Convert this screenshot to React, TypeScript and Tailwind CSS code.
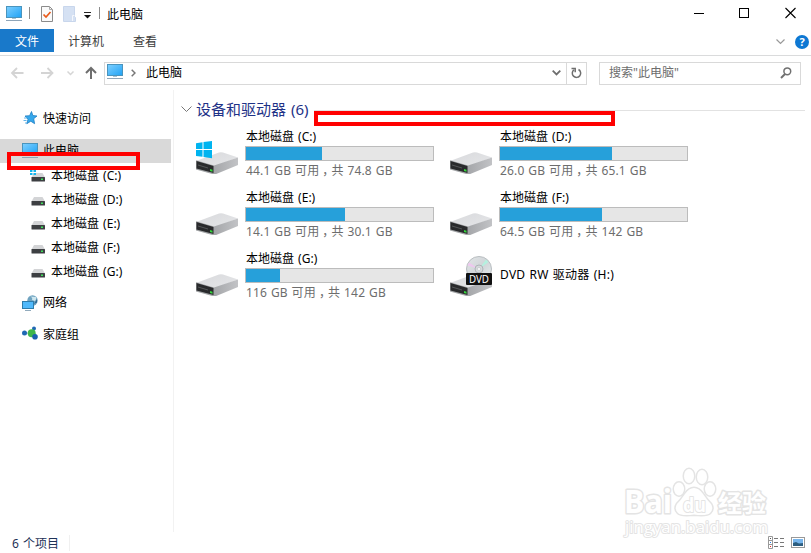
type Drive = {
  name: string;
  letter: string;
  kind: "system" | "disk" | "dvd";
  free?: string;
  total?: string;
  used?: number;
};

const drives: Drive[] = [
  { name: "本地磁盘 (C:)", letter: "C", kind: "system", free: "44.1 GB 可用", total: "共 74.8 GB", used: 76 },
  { name: "本地磁盘 (D:)", letter: "D", kind: "disk", free: "26.0 GB 可用", total: "共 65.1 GB", used: 112 },
  { name: "本地磁盘 (E:)", letter: "E", kind: "disk", free: "14.1 GB 可用", total: "共 30.1 GB", used: 99 },
  { name: "本地磁盘 (F:)", letter: "F", kind: "disk", free: "64.5 GB 可用", total: "共 142 GB", used: 102 },
  { name: "本地磁盘 (G:)", letter: "G", kind: "disk", free: "116 GB 可用", total: "共 142 GB", used: 34 },
  { name: "DVD RW 驱动器 (H:)", letter: "H", kind: "dvd" },
];

function PcIcon() {
  return (
    <svg width="16" height="16" viewBox="0 0 16 16" className="shrink-0">
      <defs>
        <linearGradient id="screen" x1="0" y1="0" x2="1" y2="1">
          <stop offset="0" stopColor="#7fd0ff" />
          <stop offset="1" stopColor="#1fa2f5" />
        </linearGradient>
      </defs>
      <rect x="0.5" y="0.5" width="15" height="11" fill="url(#screen)" stroke="#4a94bd" />
      <path d="M6 12.500h4" stroke="#a9c3d3" />
      <path d="M0 14.500h16" stroke="#8fa5b8" />
    </svg>
  );
}

function SmallDriveIcon({ system }: { system?: boolean }) {
  return (
    <svg width="16" height="16" viewBox="0 0 16 16" className="mt-1 shrink-0">
      <path d="M4 4h8.500l2.500 4.500H1.500z" fill="#d3d4d6" />
      <rect x="1.500" y="8" width="13.500" height="4.500" rx="0.500" fill="#3d3f42" />
      <rect x="11" y="9.500" width="2" height="1.500" fill="#3ee05a" />
      {system && (
        <path d="M0 1h2.500v2H0zM3.500 1H6v2H3.500zM0 4h2.500v2H0zM3.500 4H6v2H3.500z" fill="#12b5ee" />
      )}
    </svg>
  );
}

function DriveIcon({ kind }: { kind: Drive["kind"] }) {
  return (
    <svg width="44" height="46" viewBox="0 0 44 46" className="shrink-0">
      <defs>
        <linearGradient id="lid" x1="0" y1="0" x2="1" y2="1">
          <stop offset="0" stopColor="#d8d9dc" />
          <stop offset="1" stopColor="#e6e7e9" />
        </linearGradient>
        <linearGradient id="side" x1="0" y1="0" x2="1" y2="0">
          <stop offset="0" stopColor="#a4a6a9" />
          <stop offset="1" stopColor="#c2c3c6" />
        </linearGradient>
        <linearGradient id="disc" x1="0" y1="0" x2="1" y2="1">
          <stop offset="0" stopColor="#e3e6e8" />
          <stop offset="0.500" stopColor="#d0d5d8" />
          <stop offset="1" stopColor="#e8eef0" />
        </linearGradient>
      </defs>
      <path d="M1 33L24 24.500Q26 24 28 24.500L43 29.500L19 38.500z" fill="url(#lid)" />
      <path d="M19 37.500L43 29.500V37L20 46.500L18.500 46z" fill="url(#side)" />
      <path d="M1 32.300L19 37.500V46.500L1 41.500z" fill="#a2a4a6" />
      <path d="M1.500 33L18.500 38V45L1.500 40.500z" fill="#292a2c" />
      <path d="M3 37l10 3" stroke="#555759" />
      <path d="M15 41l2.500 0.700v2L15 43z" fill="#35d63d" />
      {kind === "system" && (
        <path
          d="M1 15.200L7.500 14.200V21H1zM8.500 14L17 12.900V21H8.500zM1 22h6.500v6.800L1 27.900zM8.500 22H17v8.200L8.500 29z"
          fill="#00b4f0"
        />
      )}
      {kind === "dvd" && (
        <>
          <circle cx="30" cy="19" r="12.500" fill="url(#disc)" stroke="#b9bec1" />
          <path d="M30 19L18.500 15.500L20 12.500z" fill="#eec9ef" />
          <path d="M30 19L37 9.500l2.500 2.500z" fill="#b5f0df" />
          <circle cx="30" cy="19" r="4" fill="#d5d9db" stroke="#aeb4b8" />
          <circle cx="30" cy="19" r="1.500" fill="#fff" stroke="#aeb4b8" strokeWidth="0.500" />
          <rect x="17" y="23" width="26" height="12" rx="1" fill="#111" />
          <text x="30" y="32.700" textAnchor="middle" fontSize="10.500" fill="#fff" textLength="20" lengthAdjust="spacingAndGlyphs">
            DVD
          </text>
        </>
      )}
    </svg>
  );
}

function StarIcon() {
  return (
    <svg width="16" height="16" viewBox="0 0 16 16" className="shrink-0">
      <path
        d="M8.500 1.500L9.800 5.500L14 6L10.700 8.700L11.600 13.700L7.800 11.200L3.800 13.700L5 9.200L2 6L6.600 5.700z"
        fill="#35a8ec"
        stroke="#1f7fc4"
        strokeWidth="0.800"
      />
      <path d="M1 8h3M0.500 10.500h3M2 13h2" stroke="#64b4e8" />
    </svg>
  );
}

function NetworkIcon() {
  return (
    <svg width="16" height="16" viewBox="0 0 16 16" className="shrink-0">
      <circle cx="10.500" cy="5.500" r="5.200" fill="#6fa3c0" />
      <path d="M8 1.500q3 1 2 3.500l3 1q2-2 1-4z" fill="#cde6ee" />
      <path d="M12 9l3-1.500V4z" fill="#2c6896" />
      <rect x="0.500" y="6.500" width="11" height="7" fill="#50b9fb" stroke="#2f7dab" />
      <path d="M3 15.500h6" stroke="#91aabc" />
    </svg>
  );
}

function HomegroupIcon() {
  return (
    <svg width="16" height="16" viewBox="0 0 16 16" className="shrink-0">
      <path d="M3 7L10 7L12.500 2.500M10 7.500l3 3" stroke="#9fc8d8" fill="none" />
      <circle cx="2.500" cy="7" r="2.500" fill="#1f68b4" />
      <circle cx="12" cy="2.500" r="2" fill="#1f68b4" />
      <circle cx="9.700" cy="7.200" r="4" fill="#3fb64a" />
      <circle cx="13" cy="10.800" r="2.800" fill="#1a5fae" />
    </svg>
  );
}

function TitleBar() {
  return (
    <div className="flex h-[29px] items-center pl-1.5">
      <div className="mb-0.5">
        <PcIcon />
      </div>
      <div className="mb-1 ml-[7px] h-3 w-px bg-[#8c8c8c]" />
      <svg width="12" height="16" viewBox="0 0 12 16" className="mb-px ml-[11px]">
        <path d="M0.500 0.500h8l3 3v12h-11z" fill="#fafafa" stroke="#8b8b8b" />
        <path d="M8.500 0.500v3h3" fill="none" stroke="#aaa" />
        <path d="M2.500 8.500l2.500 2.500L9.500 6" fill="none" stroke="#e85a1a" strokeWidth="1.700" />
      </svg>
      <svg width="13" height="16" viewBox="0 0 13 16" className="mb-px ml-2.5">
        <path d="M0.500 0.500h11v10l1 1v4h-12z" fill="#d5e1f3" stroke="#c8d6ec" />
        <path d="M9.500 15V9.500h2" fill="none" stroke="#f4f7fc" />
      </svg>
      <svg width="7" height="7" viewBox="0 0 7 7" className="mt-0.5 ml-2">
        <path d="M0 0.500h7" stroke="#222" />
        <path d="M0 3h7L3.500 6.500z" fill="#111" />
      </svg>
      <div className="mb-1 ml-2 h-3 w-px bg-[#8c8c8c]" />
      <span className="ml-[7px] text-black">此电脑</span>
      <svg width="103" height="12" viewBox="0 0 103 12" className="mr-3.5 mb-[3px] ml-auto">
        <path d="M0 6.500h10" stroke="#000" />
        <rect x="45.500" y="1.500" width="9" height="9" fill="none" stroke="#000" />
        <path d="M91.500 1l10 10M101.500 1l-10 10" stroke="#000" strokeWidth="1.100" />
      </svg>
    </div>
  );
}

function RibbonTabs() {
  return (
    <div className="flex h-[27px] items-start border-b border-[#dadbdc] text-[#3b3b3b]">
      <div className="flex h-[23px] w-[54px] items-center justify-center bg-[#1979ca] pt-0.5 text-white">文件</div>
      <div className="flex h-[25px] items-center pl-3.5">计算机</div>
      <div className="flex h-[25px] items-center pl-[29px]">查看</div>
      <div className="ml-auto flex h-[26px] items-center">
        <svg width="9" height="6" viewBox="0 0 9 6">
          <path d="M0.500 0.500l4 4 4-4" fill="none" stroke="#999" strokeWidth="1.200" />
        </svg>
        <div className="mr-0.5 ml-2.5 flex size-3.5 items-center justify-center rounded-full bg-[#0e78d3] text-[11px] font-bold text-white">
          ?
        </div>
      </div>
    </div>
  );
}

function AddressBar() {
  return (
    <div className="flex h-[34px] items-center">
      <svg width="104" height="14" viewBox="0 0 104 14" fill="none">
        <path d="M23.500 7H12M17 2L12 7l5 5" stroke="#d4d4d4" strokeWidth="1.800" />
        <path d="M41 7h11.500M47.500 2l5 5-5 5" stroke="#d4d4d4" strokeWidth="1.800" />
        <path d="M67.500 5.500l3 3 3-3" stroke="#d5d5d5" strokeWidth="1.500" />
        <path d="M91 13V2M86 7l5-5 5 5" stroke="#6e6e6e" strokeWidth="2" />
      </svg>
      <div className="flex h-[23px] w-[483px] items-center border border-[#d9d9d9] pl-0.5">
        <div className="mb-0.5">
          <PcIcon />
        </div>
        <svg width="5" height="8" viewBox="0 0 5 8" className="ml-2">
          <path d="M0.700 0.700L4 4L0.700 7.300" fill="none" stroke="#777" strokeWidth="1.500" />
        </svg>
        <span className="ml-2.5 text-black">此电脑</span>
        <svg width="9" height="6" viewBox="0 0 9 6" className="ml-auto">
          <path d="M0.700 0.700l3.800 3.800 3.800-3.800" fill="none" stroke="#6e6e6e" strokeWidth="1.800" />
        </svg>
        <div className="ml-[5px] flex h-full w-5 items-center justify-center border-l border-[#d9d9d9]">
          <svg width="11" height="12" viewBox="0 0 11 12" fill="none" stroke="#6e6e6e" strokeWidth="1.500">
            <path d="M7.500 2.500A4.200 4.200 0 1 1 3 2.800" />
            <path d="M0.500 1.500h3.700v3.700" />
          </svg>
        </div>
      </div>
      <div className="ml-3 flex h-[23px] w-[202px] items-center border border-[#d9d9d9] pl-[9px] text-[#6d6d6d]">
        搜索"此电脑"
        <svg width="12" height="12" viewBox="0 0 12 12" className="mr-2 ml-auto">
          <circle cx="7.300" cy="4.300" r="3.400" fill="none" stroke="#707070" strokeWidth="1.500" />
          <path d="M5 7L1 11" stroke="#707070" strokeWidth="2" />
        </svg>
      </div>
    </div>
  );
}

function Sidebar() {
  return (
    <nav className="w-[174px] shrink-0 border-r border-[#f2f2f2] pt-4 text-black">
      <div className="flex h-6 items-center gap-1 pl-[23px]">
        <StarIcon />
        <span className="pt-0.5">快速访问</span>
      </div>
      <div className="mt-[9px] flex h-6 w-[171px] items-center gap-[5px] bg-[#d9d9d9] pl-[22px]">
        <PcIcon />
        <span>此电脑</span>
      </div>
      {drives
        .filter((d) => d.kind !== "dvd")
        .map((d) => (
          <div key={d.letter} className="flex h-6 items-center gap-[5px] pl-[30px]">
            <SmallDriveIcon system={d.kind === "system"} />
            <span className="pt-px [word-spacing:1px]">{d.name}</span>
          </div>
        ))}
      <div className="mt-[7px] flex h-6 items-center gap-[5px] pt-0.5 pl-[22px]">
        <NetworkIcon />
        网络
      </div>
      <div className="mt-2 flex h-6 items-center gap-[5px] pl-[22px]">
        <HomegroupIcon />
        <span className="pt-0.5">家庭组</span>
      </div>
    </nav>
  );
}

function DriveTile({ drive }: { drive: Drive }) {
  return (
    <div className="flex h-[61px] w-[254px]">
      <DriveIcon kind={drive.kind} />
      {drive.kind === "dvd" ? (
        <span className="ml-[7px] pt-4 leading-[18px] tracking-[0.25px] text-black [word-spacing:0.8px]">
          {drive.name}
        </span>
      ) : (
        <div className="ml-1.5 w-[189px]">
          <div className="h-[18px] pl-px leading-[17px] text-black [word-spacing:1px]">{drive.name}</div>
          <div className="h-[15px] border border-[#bcbcbc] bg-[#e6e6e6]">
            <div className="h-full bg-[#26a0da]" style={{ width: drive.used }} />
          </div>
          <div className="pl-px leading-[19px] tracking-[0.15px] text-[#6d6d6d] [word-spacing:0.6px]">
            {drive.free}
            <span className="mx-[3px] [font-feature-settings:'halt']">，</span>
            {drive.total}
          </div>
        </div>
      )}
    </div>
  );
}

function Watermark() {
  return (
    <svg
      width="160"
      height="80"
      viewBox="0 0 160 80"
      className="absolute top-[463px] left-[616px]"
      fill="#fff"
      stroke="#e4e4e4"
      strokeWidth="3"
      strokeLinejoin="round"
      paintOrder="stroke"
      fontFamily="'Open Sans', 'Noto Sans CJK SC', sans-serif"
    >
      <ellipse cx="63" cy="26" rx="5" ry="6.500" />
      <ellipse cx="73" cy="13" rx="5" ry="7" />
      <ellipse cx="86" cy="14" rx="5" ry="7" />
      <ellipse cx="94" cy="26" rx="5" ry="6.500" />
      <path d="M78 25q5 0 9 6t8 10q3 5-1 9q-3 3-16 1.500q-13 1.500-16-1.500q-4-4-1-9q4-4 8-10t9-6z" />
      <text x="8" y="50" fontSize="33" fontWeight="bold" textLength="48" lengthAdjust="spacingAndGlyphs">Bai</text>
      <text x="67" y="49" fontSize="20" fontWeight="bold" strokeWidth="2" textLength="23" lengthAdjust="spacingAndGlyphs">du</text>
      <text x="102" y="49" fontSize="24" fontWeight="bold" textLength="48" lengthAdjust="spacingAndGlyphs">经验</text>
      <text x="9" y="70" fontSize="17" strokeWidth="2" textLength="143" lengthAdjust="spacingAndGlyphs">jingyan.baidu.com</text>
    </svg>
  );
}

export default function App() {
  return (
    <div className="relative flex h-[553px] w-[811px] flex-col overflow-hidden bg-white font-['Noto_Sans','Noto_Sans_CJK_SC',sans-serif] text-[12px] leading-4 whitespace-nowrap">
      <TitleBar />
      <RibbonTabs />
      <AddressBar />

      <div className="flex h-[442px]">
        <Sidebar />
        <main className="flex-1 pt-2">
          <div className="flex h-[23px] items-center pr-1.5 pl-[7px] text-[15px] text-[#1e3287]">
            <svg width="11" height="7" viewBox="0 0 11 7">
              <path d="M0.500 0.500l5 5 5-5" fill="none" stroke="#777" />
            </svg>
            <h2 className="mb-0.5 ml-1 [word-spacing:1px]">设备和驱动器 (6)</h2>
            <div className="mt-0.5 ml-1.5 h-px flex-1 bg-[#e2e2e2]" />
          </div>
          <div className="mt-[7px] flex w-[530px] flex-wrap pl-[21px]">
            {drives.map((drive) => (
              <DriveTile key={drive.letter} drive={drive} />
            ))}
          </div>
        </main>
      </div>

      <footer className="flex h-[21px] items-center pr-1.5 pl-3 text-[#1e3257]">
        <span className="pt-0.5 [word-spacing:1px]">6 个项目</span>
        <div className="ml-2.5 h-4 w-px bg-[#f0f0f0]" />
        <svg width="37" height="13" viewBox="0 0 37 13" className="ml-auto">
          <path d="M0.500 0.500h4v12h-4zM0.500 4.500h4M0.500 8.500h4" fill="none" stroke="#999" />
          <path d="M6 2.500h4M12 2.500h4M6 6.500h4M12 6.500h4M6 10.500h4M12 10.500h4" stroke="#777" />
          <path d="M2 2.500h1" stroke="#555" />
          <path d="M2 6.500h1" stroke="#2a7de1" />
          <path d="M2 10.500h1" stroke="#e22" />
          <rect x="23.500" y="1.500" width="13" height="10" fill="#fff" stroke="#999" />
          <rect x="25" y="3" width="10" height="7" fill="#77b5ec" />
          <path d="M25 7l3-1 3 1.500 4-0.500v3H25z" fill="#2d5e80" />
        </svg>
      </footer>

      {/* Highlight boxes over the window */}
      <div className="absolute top-[152px] left-[7px] h-[18px] w-[133px] border-4 border-[#f00]" />
      <div className="absolute top-[111px] left-[314px] h-[15px] w-[301px] border-4 border-[#f00]" />
      <Watermark />
    </div>
  );
}
